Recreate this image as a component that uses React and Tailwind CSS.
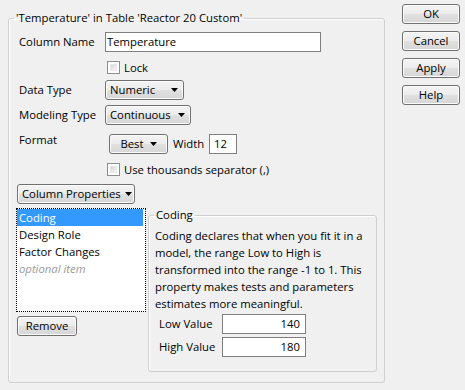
import React from "react";

const font = "font-['Open_Sans',sans-serif]";

function Tri() {
  return (
    <svg width="7" height="4" viewBox="0 0 7 4" className="shrink-0">
      <polygon points="0,0 7,0 3.5,4" fill="#000" />
    </svg>
  );
}

const btnCls =
  "border border-[#707070] rounded-[3px] bg-[linear-gradient(to_bottom,#f4f4f4_0%,#ececec_48%,#e0e0e0_52%,#d6d6d6_100%)] shadow-[inset_0_0_0_1px_#fcfcfc] text-black text-[11.3px] leading-[16px] whitespace-nowrap";

function Dropdown({ label, className = "" }) {
  return (
    <div className={`${btnCls} h-[20px] flex items-center justify-between pl-[4px] pr-[5px] gap-[4px] ${className}`}>
      <span>{label}</span>
      <Tri />
    </div>
  );
}

function Check() {
  return (
    <div className="w-[13px] h-[13px] border border-[#8e8f8f] bg-white p-[2px] shrink-0">
      <div className="w-full h-full bg-[linear-gradient(135deg,#d6d6d6,#f8f8f8)] border border-[#e8e8e8]" />
    </div>
  );
}

function Input({ value, className = "", right = false }) {
  return (
    <div
      className={`h-[20px] border border-[#7f7f7f] bg-white flex items-center text-[11.3px] leading-[16px] text-black ${
        right ? "justify-end pr-[5px]" : "pl-[1px]"
      } ${className}`}
    >
      {value}
    </div>
  );
}

function Btn({ label, className = "" }) {
  return (
    <div className={`${btnCls} h-[20px] flex items-center justify-center ${className}`}>{label}</div>
  );
}

export default function App() {
  return (
    <div className={`w-[465px] h-[390px] bg-[#f0f0f0] flex items-start ${font} text-[11.3px] leading-[16px] text-black`}>
      <fieldset className="ml-[8px] mt-[10px] w-[377px] h-[373px] border border-[#cfcfcf] rounded-[3px] shadow-[inset_1px_1px_0_#fff]">
        <legend className="ml-[5px] px-[2px] leading-[16px]">'Temperature' in Table 'Reactor 20 Custom'</legend>

        <div className="mt-[6px] flex items-center h-[20px]">
          <span className="ml-[10px] w-[86px]">Column Name</span>
          <Input value="Temperature" className="w-[216px]" />
        </div>

        <div className="mt-[8px] flex items-center h-[15px]">
          <div className="ml-[98px]">
            <Check />
          </div>
          <span className="ml-[4px]">Lock</span>
        </div>

        <div className="mt-[5px] flex items-center h-[20px]">
          <span className="ml-[10px] w-[86px]">Data Type</span>
          <Dropdown label="Numeric" className="w-[79px]" />
        </div>

        <div className="mt-[5px] flex items-center h-[20px]">
          <span className="ml-[10px] w-[86px]">Modeling Type</span>
          <Dropdown label="Continuous" className="w-[86px]" />
        </div>

        <div className="mt-[9px] flex items-start h-[20px]">
          <span className="ml-[10px] w-[90px] -mt-[2px]">Format</span>
          <div className={`${btnCls} w-[59px] h-[20px] flex items-center justify-center gap-[6px]`}>
            <span>Best</span>
            <Tri />
          </div>
          <span className="ml-[5px] w-[36px] h-[20px] flex items-center">Width</span>
          <Input value="12" className="w-[28px] pl-[4px]" />
        </div>

        <div className="mt-[9px] flex items-center h-[13px]">
          <div className="ml-[98px]">
            <Check />
          </div>
          <span className="ml-[4px]">Use thousands separator (,)</span>
        </div>

        <div className="mt-[8px] flex">
          <Dropdown label="Column Properties" className="ml-[8px] w-[118px]" />
        </div>

        <div className="mt-[3px] flex items-start">
          <div className="ml-[7px] mt-[1px] flex flex-col">
            <div className="w-[130px] h-[104px] bg-white border border-dotted border-black flex flex-col">
              <div className="mr-[2px] h-[17px] flex items-center pl-[2px] bg-[#3399ff] text-white">Coding</div>
              <div className="h-[17px] flex items-center pl-[2px]">Design Role</div>
              <div className="h-[17px] flex items-center pl-[2px]">Factor Changes</div>
              <div className="h-[17px] flex items-center pl-[2px] italic text-[#9a9a9a]">optional item</div>
            </div>
            <Btn label="Remove" className="mt-[4px] ml-[1px] w-[60px]" />
          </div>

          <fieldset className="ml-[2px] w-[229px] h-[165px] border border-[#cfcfcf] rounded-[3px] shadow-[inset_1px_1px_0_#fff]">
            <legend className="ml-[5px] px-[2px] leading-[16px]">Coding</legend>
            <p className="ml-[6px] mt-[4px] leading-[17px] whitespace-nowrap">
              Coding declares that when you fit it in a<br />
              model, the range Low to High is<br />
              transformed into the range -1 to 1. This<br />
              property makes tests and parameters<br />
              estimates more meaningful.
            </p>
            <div className="mt-[2px] flex items-center h-[20px]">
              <span className="ml-[10px] w-[63px]">Low Value</span>
              <Input value="140" right className="w-[84px]" />
            </div>
            <div className="mt-[3px] flex items-center h-[20px]">
              <span className="ml-[10px] w-[63px]">High Value</span>
              <Input value="180" right className="w-[84px]" />
            </div>
          </fieldset>
        </div>
      </fieldset>

      <div className="ml-[17px] mt-[4px] flex flex-col gap-[7px]">
        <Btn label="OK" className="w-[58px]" />
        <Btn label="Cancel" className="w-[58px]" />
        <Btn label="Apply" className="w-[58px]" />
        <Btn label="Help" className="w-[58px]" />
      </div>
    </div>
  );
}
